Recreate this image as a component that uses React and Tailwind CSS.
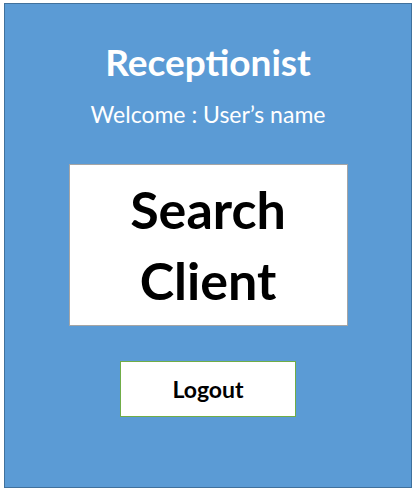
import React from "react";

const App = () => {
  return (
    <div className="w-[418px] h-[492px] bg-white pt-[3px] pl-[4px]">
      <div
        className="w-[408px] h-[485px] bg-[#5b9bd5] border border-[#41719c] flex flex-col items-center"
        style={{ fontFamily: "Lato, 'Open Sans', sans-serif" }}
      >
        <h1 className="mt-[36px] text-[37px] leading-[44px] font-bold text-white">
          Receptionist
        </h1>
        <p className="mt-[16px] text-[23px] leading-[28px] text-white">
          Welcome : User’s name
        </p>
        <button
          type="button"
          className="mt-[36px] w-[279px] h-[162px] bg-white border border-[#a5a5a5] flex items-center justify-center"
        >
          <span className="text-[52px] leading-[71px] font-bold text-black text-center">
            Search
            <br />
            Client
          </span>
        </button>
        <button
          type="button"
          className="mt-[35px] w-[176px] h-[56px] bg-white border border-[#70ad47] text-[23px] font-bold text-black"
        >
          Logout
        </button>
      </div>
    </div>
  );
};

export default App;
